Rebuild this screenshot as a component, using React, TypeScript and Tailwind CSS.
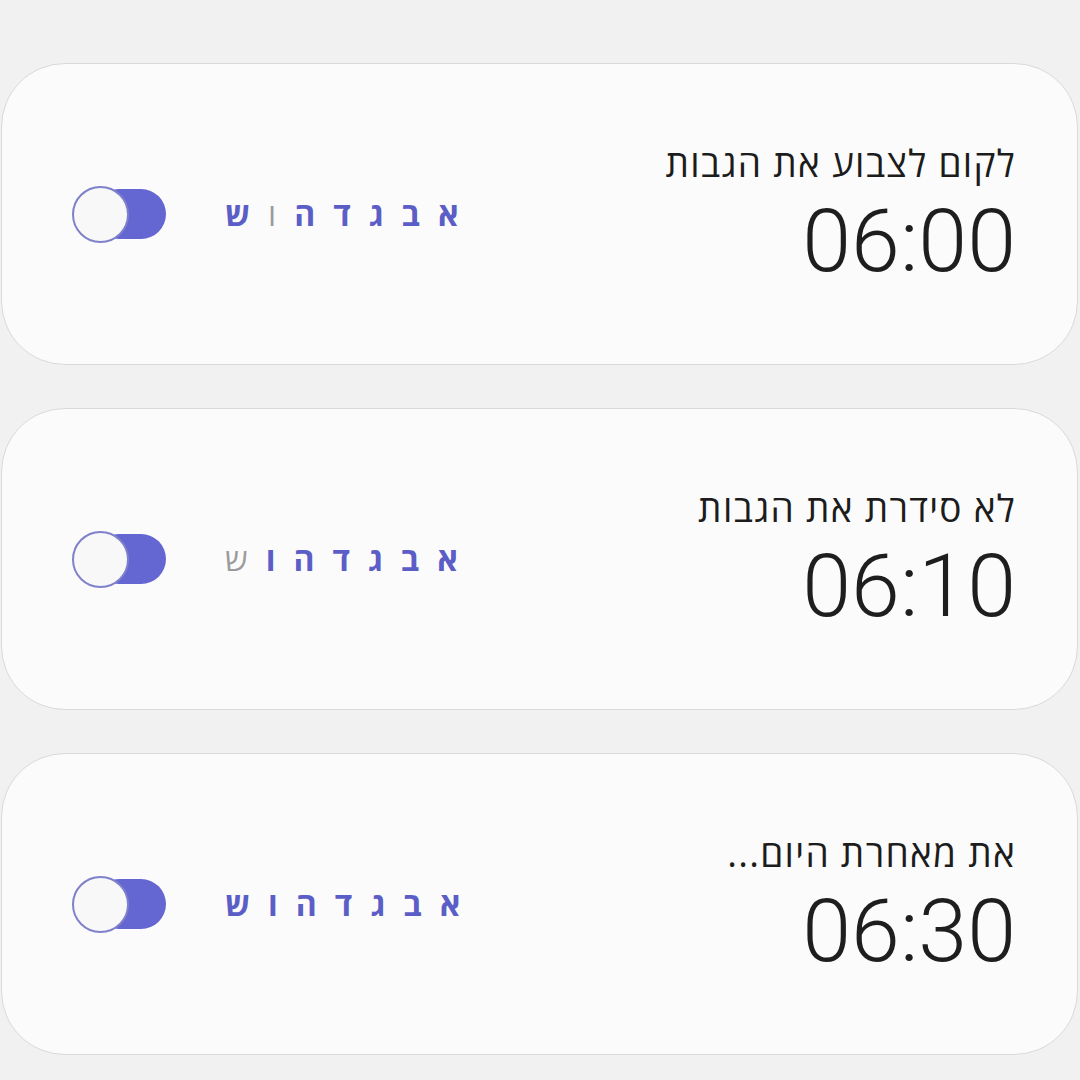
import React from 'react';

type Alarm = { title: string; time: string; off: string[] };

const alarms: Alarm[] = [
  { title: 'לקום לצבוע את הגבות', time: '06:00', off: ['ו'] },
  { title: 'לא סידרת את הגבות', time: '06:10', off: ['ש'] },
  { title: 'את מאחרת היום...', time: '06:30', off: [] },
];

const days = ['א', 'ב', 'ג', 'ד', 'ה', 'ו', 'ש'];

function Toggle() {
  return (
    <div className="relative w-[94px] h-[58px] flex items-center">
      <div className="absolute left-[22px] right-0 h-[50px] rounded-full bg-[#6466d2]" />
      <div className="absolute left-0 w-[57px] h-[57px] rounded-full bg-[#f8f8f8] border-2 border-[#7f81c9]" />
    </div>
  );
}

function AlarmCard({ alarm }: { alarm: Alarm }) {
  return (
    <div className="h-[302px] rounded-[64px] bg-[#fbfbfb] border border-[#d9d9d9] flex items-center justify-between pl-[70px] pr-[61px]">
      <div className="flex items-center gap-[59px]">
        <Toggle />
        <div dir="rtl" className="flex items-center gap-[18px] text-[32px] leading-none" style={{ fontFamily: '"Open Sans", "DejaVu Sans", sans-serif' }}>
          {days.map((d) =>
            alarm.off.includes(d) ? (
              <span key={d} className="text-[#9b9b9b] font-normal">{d}</span>
            ) : (
              <span key={d} className="text-[#5b5ec6] font-bold">{d}</span>
            )
          )}
        </div>
      </div>
      <div dir="rtl" className="flex flex-col items-start">
        <div className="text-[37px] leading-[40px] text-[#1c1c1c] tracking-[0.035em]" style={{ fontFamily: '"Open Sans", "DejaVu Sans", sans-serif' }}>
          {alarm.title}
        </div>
        <div dir="ltr" className="mt-[14px] text-[88px] leading-[88px] font-light text-[#1e1e1e]" style={{ fontFamily: 'Roboto, sans-serif' }}>
          {alarm.time}
        </div>
      </div>
    </div>
  );
}

export default function App() {
  return (
    <div className="w-[1080px] h-[1080px] bg-[#f1f1f1] pt-[63px] pl-[1px] pr-[2px] flex flex-col gap-[43px]">
      {alarms.map((a) => (
        <AlarmCard key={a.time} alarm={a} />
      ))}
    </div>
  );
}
